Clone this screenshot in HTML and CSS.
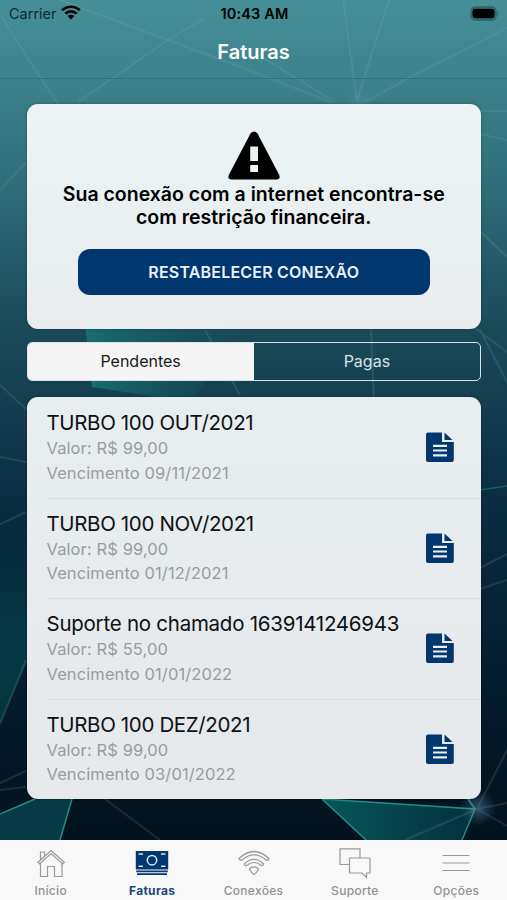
FILE: index.html
```
<!DOCTYPE html>
<html lang="pt-BR">
<head>
  <meta charset="UTF-8" />
  <meta name="viewport" content="width=device-width, initial-scale=1.0"/>
  <title>Faturas</title>
  <link rel="stylesheet" href="styles.css">
</head>
<body>

<svg class="background" viewBox="0 0 507 900" preserveAspectRatio="none">
  <defs>
    <linearGradient id="teal" x1="0" y1="0" x2="1" y2="0">
      <stop offset="0" stop-color="#16706f"/>
      <stop offset="1" stop-color="#17505e" stop-opacity="0"/>
    </linearGradient>
    <linearGradient id="left" x1="0" y1="0" x2="0" y2="1">
      <stop offset="0" stop-color="#06404a" stop-opacity="0"/>
      <stop offset=".6" stop-color="#05404a"/>
      <stop offset="1" stop-color="#043c45"/>
    </linearGradient>
    <linearGradient id="bottom" x1="0" y1="0" x2="1" y2="0">
      <stop offset="0" stop-color="#06565a"/>
      <stop offset="1" stop-color="#04303f"/>
    </linearGradient>
    <radialGradient id="glow">
      <stop offset="0" stop-color="#5b8fb0" stop-opacity=".6"/>
      <stop offset="1" stop-color="#5b8fb0" stop-opacity="0"/>
    </radialGradient>
  </defs>
  <path fill="url(#teal)" d="M85 322L250 322L190 402L92 387Z"/>
  <path fill="url(#left)" opacity=".8" d="M0 520H30V655L0 724Z"/>
  <path fill="#053a46" d="M0 814L35 799H72L60 840H0Z"/>
  <path fill="url(#bottom)" d="M322 799L475 809L462 840H366Z"/>
  <g fill="none" stroke="#8fb5b8" stroke-width="2" opacity=".16">
    <path d="M0 14L30 62L58 104M60 0L168 40L254 72L330 102M205 18L168 40L78 102M254 52L335 102"/>
    <path d="M343 0L357 100L389 0M365 102L405 80L507 28M480 111H507M480 134L507 140M480 231L507 257"/>
    <path d="M0 190L26 162M0 385L26 409M0 457L26 462M0 524L26 512M240 395L205 330M371 330L374 400M475 328L507 352M480 330L507 382"/>
    <path d="M480 568L507 554M480 589L507 580M26 660L0 724M0 783L26 771M0 790L26 787M105 799L160 840M477 809L405 840M477 809L507 750M477 809L507 803M477 809L507 826"/>
  </g>
  <g fill="none" stroke="#1f8f88" stroke-width="1.5">
    <path d="M0 814L35 799M72 799L60 840M322 799L475 809L462 840M322 799L366 840M468 799L475 809"/>
    <path opacity=".5" d="M480 490L507 486"/>
  </g>
  <circle cx="359" cy="100" r="14" fill="url(#glow)" opacity=".6"/>
  <circle cx="478" cy="808" r="18" fill="url(#glow)" opacity=".8"/>
</svg>

<div class="app">
  <header>
    <div class="status">
      <div class="carrier">
        <span>Carrier</span>
        <svg width="20" height="15" viewBox="0 0 20 15">
          <g fill="none" stroke="#000" stroke-width="2.7">
            <path d="M1.2 5.3A12.7 12.7 0 0 1 18.8 5.3"/>
            <path d="M4.3 8.6A8.2 8.2 0 0 1 15.7 8.6"/>
          </g>
          <path d="M6.6 11.1A4.8 4.8 0 0 1 13.4 11.1L10 14.4Z"/>
        </svg>
      </div>
      <span class="time">10:43 AM</span>
      <svg class="battery" width="31" height="15" viewBox="0 0 31 15">
        <rect x="2" y="1" width="25" height="13" rx="4" fill="#357882" stroke="#2a616a" stroke-width="1.3"/>
        <rect x="3.5" y="2.8" width="22" height="9.4" rx="2.4"/>
        <path fill="#2a616a" d="M28.500 5Q30.500 7.500 28.500 10Z"/>
      </svg>
    </div>
    <h1>Faturas</h1>
  </header>

  <main>
    <section class="card notice">
      <svg width="52" height="49" viewBox="0 0 52 49">
        <path d="M22.500 2.500Q26 -1.500 29.500 2.500L51 43.500Q53 48 48.500 48.500H3.500Q-1 48 1 43.500Z"/>
        <path fill="#ecf2f2" d="M22.200 15.500H30V30H22.200ZM22.200 34H30V41H22.200Z"/>
      </svg>
      <p>Sua conexão com a internet encontra-se<br>com restrição financeira.</p>
      <button>RESTABELECER CONEXÃO</button>
    </section>

    <div class="segment">
      <button class="active">Pendentes</button>
      <button>Pagas</button>
    </div>

    <ul class="card list">
      <li>
        <div>
          <h2>TURBO 100 OUT/2021</h2>
          <p>Valor: R$ 99,00</p>
          <p>Vencimento 09/11/2021</p>
        </div>
        <svg class="doc" viewBox="0 0 28 30"><use href="#doc"/></svg>
      </li>
      <li>
        <div>
          <h2>TURBO 100 NOV/2021</h2>
          <p>Valor: R$ 99,00</p>
          <p>Vencimento 01/12/2021</p>
        </div>
        <svg class="doc" viewBox="0 0 28 30"><use href="#doc"/></svg>
      </li>
      <li>
        <div>
          <h2 class="long">Suporte no chamado 1639141246943</h2>
          <p>Valor: R$ 55,00</p>
          <p>Vencimento 01/01/2022</p>
        </div>
        <svg class="doc" viewBox="0 0 28 30"><use href="#doc"/></svg>
      </li>
      <li>
        <div>
          <h2>TURBO 100 DEZ/2021</h2>
          <p>Valor: R$ 99,00</p>
          <p>Vencimento 03/01/2022</p>
        </div>
        <svg class="doc" viewBox="0 0 28 30"><use href="#doc"/></svg>
      </li>
    </ul>
  </main>

  <nav>
    <a>
      <svg viewBox="0 0 36 32">
        <path d="M7.500 15.500V29.500H14.500V19.500H21.500V29.500H29V15.500M5 15.300L18 3.500L31.300 15.300L29.800 17L18 6.500L6.500 17ZM7.500 12.800V5H11.500V9"/>
      </svg>
      <span>Início</span>
    </a>
    <a class="active">
      <svg viewBox="0 0 36 32">
        <path class="fill" d="M1.800 4H34.200V22.500H1.800ZM2.300 23.500H33.700V25.300H2.300ZM3 26.300H33V28H3Z"/>
        <path class="light" d="M4.500 7H9M27 7H31.500M4.500 19.300H9M27 19.300H31.500"/>
        <circle class="light" cx="18" cy="13.200" r="4.700"/>
      </svg>
      <span>Faturas</span>
    </a>
    <a>
      <svg viewBox="0 0 36 32">
        <path d="M3 11.500Q18 -2.500 33 11.500Q32.300 13.800 30.500 13.300Q18 2.500 5.500 13.300Q3.700 13.800 3 11.500ZM8.300 17Q18 7.800 27.700 17Q27 19.200 25.300 18.500Q18 12.500 10.700 18.500Q9 19.200 8.300 17ZM13.300 22Q18 17.800 22.700 22Q20.500 26 18 27.500Q15.500 26 13.300 22Z"/>
      </svg>
      <span>Conexões</span>
    </a>
    <a>
      <svg viewBox="0 0 36 32">
        <path d="M12.500 17.500H3V1.800H23V11M12.500 11H33V26H29.500V30.500L25 26H12.500Z"/>
      </svg>
      <span>Suporte</span>
    </a>
    <a>
      <svg viewBox="0 0 36 32">
        <path d="M4.500 8.500H31.500M4.500 16H31.500M4.500 23.500H31.500"/>
      </svg>
      <span>Opções</span>
    </a>
  </nav>
</div>

<svg width="0" height="0" class="symbols">
  <symbol id="doc" viewBox="0 0 28 30">
    <path fill="#02366f" d="M2 .5H16V10H27.800V28Q27.800 30 26 30H2Q0 30 0 28V2.500Q0 .5 2 .5ZM18.500 .5L26.500 8H18.500Z"/>
    <path stroke="#e9eeef" stroke-width="2.200" d="M7 13.800H21M7 18.500H21M7 23.300H21"/>
  </symbol>
</svg>

</body>
</html>
```
FILE: styles.css
```
* {
  box-sizing: border-box;
}
body {
  margin: 0;
  height: 900px;
  overflow: hidden;
  font-family: Inter, "Liberation Sans", sans-serif;
  background: linear-gradient(#468f99 0, #3c818b 80px, #2f6f7a 180px, #245b68 260px, #194957 335px, #143f50 400px, #0c3044 480px, #072638 570px, #041b2b 700px, #02121f 840px);
}
.background {
  position: absolute;
  left: 0;
  top: 0;
  width: 507px;
  height: 900px;
}
.symbols {
  position: absolute;
}
.app {
  position: relative;
  height: 900px;
  display: flex;
  flex-direction: column;
}
header {
  height: 79px;
  border-bottom: 1px solid #2f707a;
}
.status {
  height: 27px;
  padding: 0 7px 0 9px;
  display: grid;
  grid-template-columns: 1fr auto 1fr;
  align-items: center;
  font-size: 14.5px;
}
.carrier {
  display: flex;
  align-items: center;
  gap: 4px;
  color: #0c2b31;
}
.carrier svg {
  margin-top: -3px;
}
.time {
  font-weight: 600;
  letter-spacing: .15px;
}
.battery {
  justify-self: end;
}
h1 {
  margin: 0;
  text-align: center;
  font-size: 20px;
  font-weight: 600;
  line-height: 50px;
  color: #fff;
}
main {
  flex: 1;
  padding: 25px 26px 0 26.5px;
}
.card {
  background: linear-gradient(rgba(253,255,255,.91), rgba(250,250,250,.92));
  border-radius: 11px;
  box-shadow: 0 0 3px rgba(0,0,0,.3);
}
.notice {
  height: 225px;
  padding-top: 27px;
  display: flex;
  flex-direction: column;
  align-items: center;
}
.notice p {
  margin: 3px 0 0;
  font-size: 19.5px;
  font-weight: 600;
  line-height: 23px;
  text-align: center;
}
.notice button {
  margin-top: 20px;
  width: 352px;
  height: 46px;
  border: none;
  border-radius: 12px;
  background: #02366f;
  color: #e9f1fa;
  font-family: inherit;
  font-size: 16px;
  font-weight: 600;
  letter-spacing: .2px;
}
.segment {
  display: flex;
  height: 39px;
  margin: 13px 0 16px;
  border: 1.5px solid #d5e3e5;
  border-radius: 5px;
  overflow: hidden;
}
.segment button {
  flex: 1;
  padding: 0 0 2px;
  border: none;
  background: none;
  color: #d5e3e5;
  font-family: inherit;
  font-size: 16px;
}
.segment .active {
  background: #f5f5f6;
  color: #1a1a1a;
}
.list {
  margin: 0;
  padding: 0;
  list-style: none;
  background: linear-gradient(rgba(250,253,253,.92), rgba(250,251,252,.92));
}
.list li {
  height: 100.6px;
  margin-left: 20px;
  padding: 13px 27px 0 0;
  display: flex;
  justify-content: space-between;
}
.list li + li {
  padding-top: 12px;
  border-top: 1px solid #d8dcde;
}
.list h2 {
  margin: 0;
  font-size: 20.5px;
  font-weight: 400;
  line-height: 26px;
  letter-spacing: -.36px;
  color: #0e1113;
}
.list .long {
  letter-spacing: -.25px;
}
.list p {
  margin: 0;
  font-size: 16.5px;
  line-height: 24.5px;
  letter-spacing: .1px;
  color: #989b9d;
}
.doc {
  width: 28px;
  height: 30px;
  margin-top: 22px;
}
nav {
  height: 60px;
  display: flex;
  background: #f8f8f8;
}
nav a {
  flex: 1;
  display: flex;
  flex-direction: column;
  align-items: center;
  padding-top: 7px;
  font-size: 12px;
  font-weight: 500;
  line-height: 15px;
  letter-spacing: .3px;
  color: #929292;
}
nav svg {
  width: 36px;
  height: 32px;
  margin-bottom: 4px;
  fill: none;
  stroke: #999;
  stroke-width: 1.2;
}
nav .active {
  font-weight: 700;
  color: #1b447a;
}
nav .fill {
  fill: #02366f;
  stroke: none;
}
nav .light {
  stroke: #dce6f0;
  stroke-width: 1.5;
}
```
